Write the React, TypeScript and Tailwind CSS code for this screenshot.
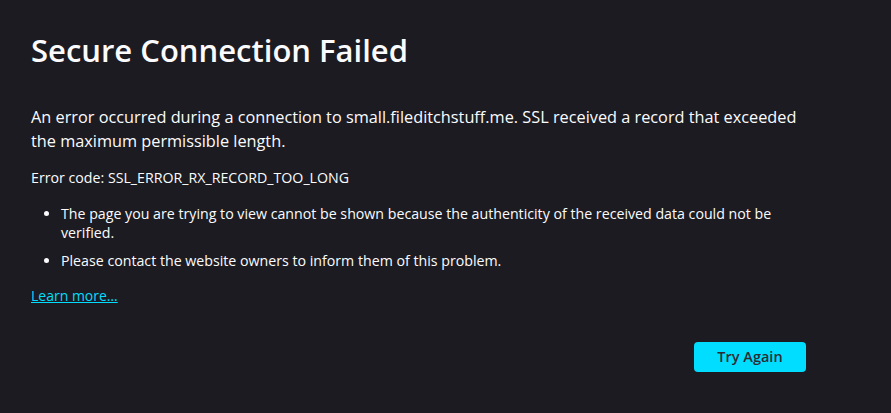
export default function App() {
  return (
    <div className="min-h-screen bg-[#1c1b22] text-[#fbfbfe] font-['Open_Sans',sans-serif]">
      <div className="ml-[31px] w-[775px] pt-[32px]">
        {/* Title */}
        <h1 className="text-[31px] leading-[36px] font-semibold">Secure Connection Failed</h1>

        {/* Description */}
        <p className="mt-[37px] text-[16.3px] leading-[24px]">
          An error occurred during a connection to small.fileditchstuff.me. SSL received a record that exceeded the
          maximum permissible length.
        </p>

        <p className="mt-[15px] text-[14.2px] leading-[20px]">Error code: SSL_ERROR_RX_RECORD_TOO_LONG</p>

        <ul className="mt-[16px] list-disc pl-[30px] text-[14.2px] leading-[19px]">
          <li>
            The page you are trying to view cannot be shown because the authenticity of the received data could not
            be verified.
          </li>
          <li className="mt-[9px]">Please contact the website owners to inform them of this problem.</li>
        </ul>

        <a href="#" className="mt-[16px] block w-fit text-[14px] leading-[19px] text-[#00ddff] underline">
          Learn more…
        </a>

        {/* Actions */}
        <div className="mt-[37px] flex justify-end">
          <button className="h-[30px] w-[112px] rounded-[4px] bg-[#00ddff] text-[14.5px] font-semibold text-[#2b2a33]">
            Try Again
          </button>
        </div>
      </div>
    </div>
  );
}
